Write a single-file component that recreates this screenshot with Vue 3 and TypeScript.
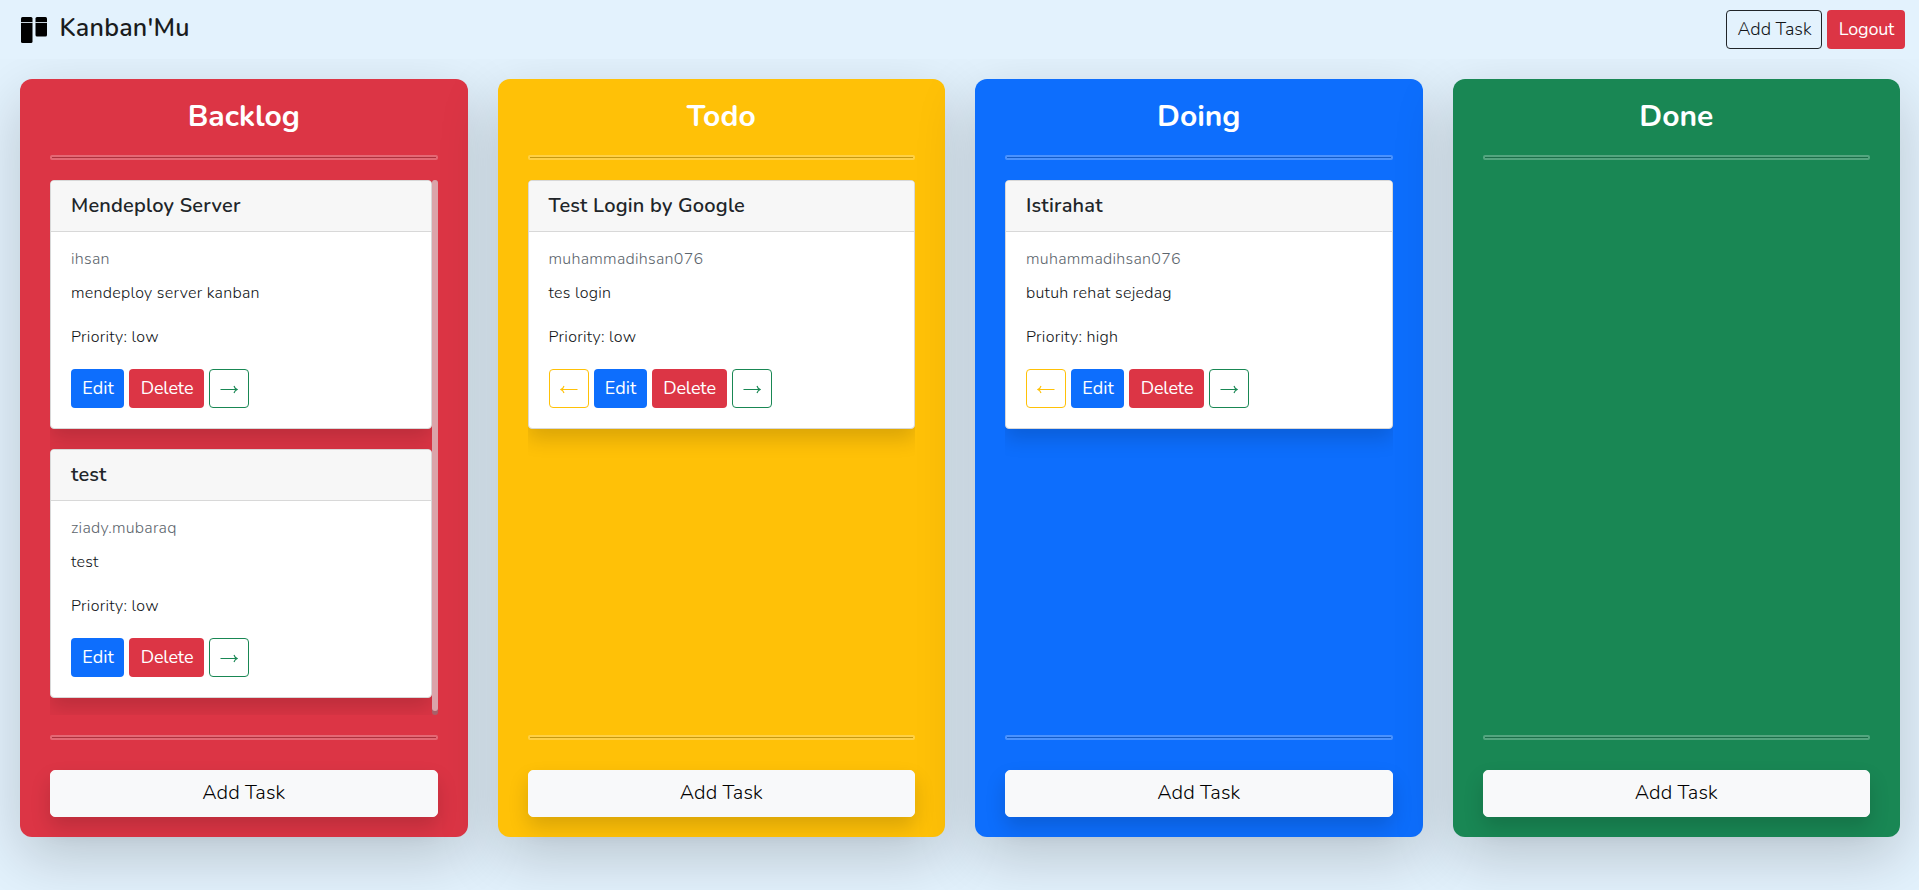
<script setup lang="ts">
interface Task {
  title: string
  user: string
  description: string
  priority: string
}

interface Column {
  key: string
  name: string
  back: boolean
  tasks: Task[]
}

const columns: Column[] = [
  {
    key: 'backlog',
    name: 'Backlog',
    back: false,
    tasks: [
      { title: 'Mendeploy Server', user: 'ihsan', description: 'mendeploy server kanban', priority: 'low' },
      { title: 'test', user: 'ziady.mubaraq', description: 'test', priority: 'low' },
    ],
  },
  {
    key: 'todo',
    name: 'Todo',
    back: true,
    tasks: [{ title: 'Test Login by Google', user: 'muhammadihsan076', description: 'tes login', priority: 'low' }],
  },
  {
    key: 'doing',
    name: 'Doing',
    back: true,
    tasks: [{ title: 'Istirahat', user: 'muhammadihsan076', description: 'butuh rehat sejedag', priority: 'high' }],
  },
  { key: 'done', name: 'Done', back: true, tasks: [] },
]
</script>

<template>
  <div class="page">
    <nav class="navbar">
      <div class="brand">
        <svg class="logo" width="26" height="26" viewBox="0 0 26 26">
          <rect x="0" y="0" width="11.5" height="26" rx="1.5" />
          <rect x="14.5" y="0" width="11.5" height="19.5" rx="1.5" />
          <path d="M0 5.5H12M14 5.5H26" stroke="#c3cfd8" stroke-width="1" />
        </svg>
        <span class="brand-name">Kanban'Mu</span>
      </div>
      <div class="nav-actions">
        <button class="btn nav-add">Add Task</button>
        <button class="btn nav-logout">Logout</button>
      </div>
    </nav>

    <main class="board">
      <section v-for="column in columns" :key="column.key" class="column" :class="column.key">
        <h3 class="column-title">{{ column.name }}</h3>
        <div class="rule"></div>
        <div class="scroller">
          <div class="task-list">
            <article v-for="task in column.tasks" :key="task.title" class="card">
              <header class="card-header">{{ task.title }}</header>
              <div class="card-body">
                <p class="user">{{ task.user }}</p>
                <p class="description">{{ task.description }}</p>
                <p class="priority">Priority: {{ task.priority }}</p>
                <div class="actions">
                  <button v-if="column.back" class="btn arrow previous" aria-label="Previous">
                    <svg width="18" height="9" viewBox="0 0 18 9">
                      <path d="M17.5 4.5H.5M4 1Q3.2 3.7 .8 4.5Q3.2 5.3 4 8" />
                    </svg>
                  </button>
                  <button class="btn edit">Edit</button>
                  <button class="btn delete">Delete</button>
                  <button class="btn arrow next" aria-label="Next">
                    <svg width="18" height="9" viewBox="0 0 18 9">
                      <path d="M.5 4.5H17.5M14 1Q14.8 3.7 17.2 4.5Q14.8 5.3 14 8" />
                    </svg>
                  </button>
                </div>
              </div>
            </article>
          </div>
          <div v-if="column.tasks.length > 1" class="track"><div class="thumb"></div></div>
        </div>
        <div class="rule"></div>
        <button class="add-task">Add Task</button>
      </section>
    </main>
  </div>
</template>

<style>
body {
  margin: 0;
  background: #e3f2fd;
}
</style>

<style scoped>
.page {
  height: 890px;
  overflow: hidden;
  background: #e3f2fd;
  color: #212529;
  font-family: Nunito, Lato, 'Open Sans', sans-serif;
  font-size: 16px;
  font-weight: 300;
}

.page * {
  box-sizing: border-box;
}

.navbar {
  position: relative;
  z-index: 1;
  display: flex;
  align-items: center;
  justify-content: space-between;
  height: 59px;
  padding: 0 14px 0 21px;
  background: #e3f2fd;
}

.brand {
  display: flex;
  align-items: center;
  gap: 12.5px;
}

.logo {
  margin-top: 1px;
}

.brand-name {
  color: #1a1c1e;
  font-size: 25px;
  font-weight: 600;
  line-height: 36px;
  margin-top: -4px;
  letter-spacing: 0.25px;
}

.nav-actions {
  display: flex;
  gap: 5px;
}

.btn {
  display: flex;
  align-items: center;
  justify-content: center;
  height: 39px;
  padding: 0 0 1px 1px;
  border: 1px solid transparent;
  border-radius: 4px;
  background: transparent;
  color: #fff;
  font-family: inherit;
  font-size: 18px;
  font-weight: 400;
  line-height: 27px;
}

.nav-add {
  width: 96px;
  border-color: #212529;
  color: #121518;
  font-weight: 300;
}

.nav-logout {
  width: 78px;
  background: #dc3545;
  letter-spacing: -0.2px;
}

.board {
  display: grid;
  grid-template-columns: repeat(4, 447.5px);
  gap: 30px;
  padding: 20px 0 0 20px;
}

.column {
  display: flex;
  flex-direction: column;
  height: 758px;
  padding: 16px 30px 20px;
  border-radius: 12px;
  box-shadow: 0 20px 60px rgba(0, 0, 0, 0.19);
}

.backlog {
  background: #dc3545;
}

.todo {
  background: #ffc107;
}

.doing {
  background: #0d6efd;
}

.done {
  background: #198754;
}

.column-title {
  height: 40px;
  margin: 0 0 20px;
  color: #fff;
  font-size: 30px;
  font-weight: 700;
  line-height: 43px;
  text-align: center;
}

.rule {
  flex: none;
  height: 5px;
  border: 2px solid #fff;
  border-radius: 2px;
  background: #212529;
  opacity: 0.25;
}

.scroller {
  display: flex;
  height: 535px;
  margin: 20px 0;
  overflow: hidden;
}

.task-list {
  flex: 1;
  min-width: 0;
  overflow: hidden;
}

.track {
  width: 6px;
  border-radius: 3px;
  background: #a86068;
}

.thumb {
  height: 531px;
  border-radius: 3px;
  background: #dba3a9;
}

.card {
  height: 249px;
  margin-bottom: 20px;
  border: 1px solid #d8d8d8;
  border-radius: 4px;
  background: #fff;
  box-shadow: 0 10px 20px rgba(0, 0, 0, 0.15);
}

.card-header {
  height: 51px;
  padding: 0 20px;
  border-bottom: 1px solid #d8d8d8;
  border-radius: 3px 3px 0 0;
  background: #f7f7f7;
  font-size: 20px;
  font-weight: 600;
  line-height: 50px;
  letter-spacing: 0.2px;
}

.card-body {
  padding: 15px 20px 0;
}

.card-body p {
  height: 24px;
  margin: 0;
  color: #101316;
  line-height: 24px;
  letter-spacing: 0.27px;
}

.card-body .user {
  margin-bottom: 10px;
  color: #5c656d;
}

.card-body .description {
  margin-bottom: 20px;
}

.card-body .priority {
  margin-bottom: 20px;
}

.actions {
  display: flex;
  gap: 5px;
}

.edit {
  width: 53px;
  background: #0d6efd;
}

.delete {
  width: 75px;
  background: #dc3545;
  letter-spacing: -0.15px;
}

.arrow {
  width: 40px;
  padding: 2px 0 0;
}

.arrow path {
  fill: none;
  stroke: currentColor;
  stroke-width: 1.1;
}

.previous {
  border-color: #ffc107;
  color: #ffc107;
}

.next {
  border-color: #198754;
  color: #198754;
}

.add-task {
  height: 47px;
  margin-top: 30px;
  padding: 0 0 3px;
  border: 1px solid #f8f9fa;
  border-radius: 5px;
  background: #f8f9fa;
  box-shadow: 0 10px 20px rgba(0, 0, 0, 0.15);
  color: #000;
  font-family: inherit;
  font-size: 20px;
  font-weight: 300;
  letter-spacing: 0.1px;
}
</style>
